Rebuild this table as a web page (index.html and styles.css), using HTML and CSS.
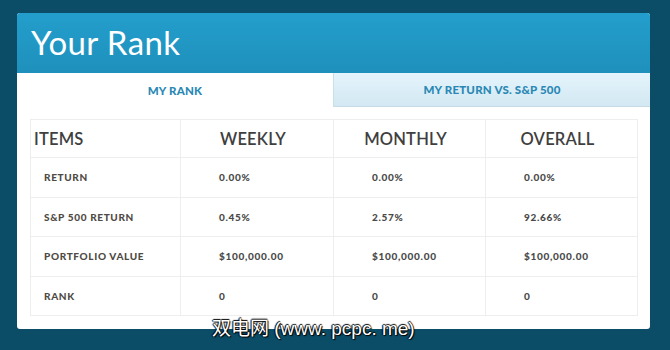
FILE: index.html
```html
<!DOCTYPE html>
<html>
<head>
<meta charset="utf-8">
<link rel="stylesheet" href="styles.css">
</head>
<body>
<div class="card">
  <div class="card-head"><h1 class="title">Your Rank</h1></div>
  <div class="tabs">
    <div class="tab tab-active">MY RANK</div>
    <div class="tab tab-inactive">MY RETURN VS. S&amp;P 500</div>
  </div>
  <div class="body">
    <table class="rank">
      <colgroup><col class="c1"><col class="c2"><col class="c3"><col class="c4"></colgroup>
      <thead>
        <tr><th class="items">ITEMS</th><th>WEEKLY</th><th>MONTHLY</th><th>OVERALL</th></tr>
      </thead>
      <tbody>
        <tr><td class="label">RETURN</td><td>0.00%</td><td>0.00%</td><td>0.00%</td></tr>
        <tr><td class="label">S&amp;P 500 RETURN</td><td>0.45%</td><td>2.57%</td><td>92.66%</td></tr>
        <tr><td class="label">PORTFOLIO VALUE</td><td>$100,000.00</td><td>$100,000.00</td><td>$100,000.00</td></tr>
        <tr><td class="label">RANK</td><td>0</td><td>0</td><td>0</td></tr>
      </tbody>
    </table>
  </div>
</div>
<div class="watermark">双电网 (www. pcpc. me)</div>
</body>
</html>
```

FILE: styles.css
```css
html, body { margin: 0; padding: 0; }
body {
  width: 670px; height: 350px; overflow: hidden;
  background: #0b4c66;
  font-family: "Lato", "Open Sans", sans-serif;
  position: relative;
}
.card {
  position: absolute;
  left: 17px; top: 13px;
  width: 633px; height: 316px;
  background: #fff;
  border-radius: 3px;
  overflow: hidden;
  box-sizing: border-box;
}
.card-head {
  height: 60px;
  background: linear-gradient(#239ecc, #1f90bc);
  display: flex; align-items: center;
  padding-left: 14px;
}
.title {
  margin: 0;
  color: #fff;
  font-family: "Lato", sans-serif;
  font-weight: 400;
  font-size: 33px;
  letter-spacing: 0.4px;
  position: relative; top: -1px;
}
.tabs { display: flex; height: 34px; }
.tab {
  display: flex; align-items: center; justify-content: center;
  font-family: "Lato", sans-serif;
  font-weight: 900; font-size: 11.5px;
  color: #2a88b4;
  letter-spacing: 0.2px;
}
.tab-active { width: 316px; background: #fff; }
.tab-inactive {
  flex: 1;
  background: linear-gradient(#e4f4fc, #d3e8f2);
  border-left: 1px solid #c8e0ea;
  border-bottom: 1px solid #c8dce6;
  box-sizing: border-box;
}
.body { padding: 12px 13px 13px 13px; }
.rank {
  width: 607px;
  border-collapse: collapse;
  table-layout: fixed;
  color: #444;
}
.c1 { width: 150px; } .c2 { width: 153px; } .c3 { width: 152px; } .c4 { width: 152px; }
.rank th, .rank td { border: 1px solid #eeeeee; }
.rank th {
  height: 37px;
  font-family: "Lato", sans-serif;
  font-weight: 600; font-size: 16.5px;
  color: #3f3f3f;
  text-align: center;
  padding: 0 8px 0 0;
  letter-spacing: 0.2px;
}
.rank th.items { text-align: left; padding: 0 0 0 3px; }
.rank td {
  height: 38.5px;
  padding: 0 0 0 38px;
  font-family: "Lato", sans-serif;
  font-weight: 900; font-size: 10px;
  color: #4a4a4a;
  letter-spacing: 0.7px;
}
.rank td.label { padding-left: 13px; color: #4f4a44; letter-spacing: 0.65px; }
.watermark {
  position: absolute;
  left: 212px; top: 313px;
  color: #fff;
  font-family: "Liberation Sans", "Noto Sans CJK SC", sans-serif;
  font-size: 19px;
  text-shadow: 1px 1px 1px #000, -1px 0 1px #000, 0 -1px 1px #000;
  white-space: nowrap;
}
```
